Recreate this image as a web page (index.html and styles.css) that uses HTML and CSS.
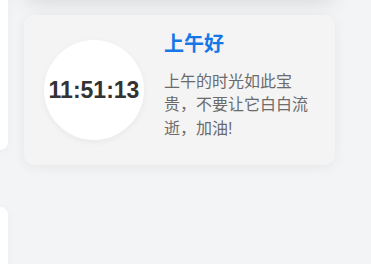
FILE: index.html
```html
<!DOCTYPE html>
<html lang="zh-CN">
<head>
  <meta charset="UTF-8" />
  <meta name="viewport" content="width=device-width, initial-scale=1.0" />
  <title>问候</title>
  <link rel="stylesheet" href="styles.css">
</head>
<body>
  <div class="layout">
    <!-- left column, mostly scrolled off -->
    <div class="side">
      <div class="side-card side-card-top"></div>
      <div class="side-card side-card-bottom"></div>
    </div>

    <div class="main">
      <div class="card card-prev"></div>

      <!-- greeting card -->
      <div class="card greet">
        <div class="clock">11:51:13</div>
        <div class="greet-text">
          <h2 class="greet-title">上午好</h2>
          <p class="greet-desc">上午的时光如此宝贵，不要让它白白流逝，加油!</p>
        </div>
      </div>
    </div>
  </div>
</body>
</html>
```
FILE: styles.css
```css
body {
  margin: 0;
  background: #f3f4f6;
  font-family: "Liberation Sans", Arial, "Noto Sans CJK SC", sans-serif;
  overflow: hidden;
}
.layout {
  display: flex;
  gap: 16px;
  height: 264px;
}
.side {
  width: 8px;
  flex-shrink: 0;
  display: flex;
  flex-direction: column;
  align-items: flex-end;
  gap: 57px;
}
.side-card {
  width: 200px;
  flex-shrink: 0;
  background: #fff;
  border-radius: 8px;
  box-shadow: 0 2px 10px rgba(0,0,0,0.04);
}
.side-card-top {
  height: 250px;
  margin-top: -100px;
}
.side-card-bottom {
  height: 200px;
}
.main {
  width: 311px;
  display: flex;
  flex-direction: column;
  gap: 20px;
}
.card {
  background: #f4f4f5;
  border-radius: 10px;
  box-shadow: 0 2px 12px rgba(0,0,0,0.06);
}
.card-prev {
  height: 100px;
  margin-top: -105px;
  flex-shrink: 0;
  background: #f5f5f6;
  box-shadow: 0 6px 22px rgba(0,0,0,0.13);
}
.greet {
  display: flex;
  gap: 20px;
  padding: 15px 20px;
  height: 150px;
  box-sizing: border-box;
  flex-shrink: 0;
}
.clock {
  width: 100px;
  height: 100px;
  margin-top: 10px;
  flex-shrink: 0;
  border-radius: 50%;
  background: #fff;
  box-shadow: 0 2px 6px rgba(0,0,0,0.05);
  display: flex;
  align-items: center;
  justify-content: center;
  font-size: 23px;
  font-weight: bold;
  color: #333;
}
.greet-text {
  width: 150px;
}
.greet-title {
  margin: 0;
  font-size: 20px;
  line-height: 28px;
  font-weight: bold;
  color: #1677e6;
}
.greet-desc {
  margin: 12px 0 0;
  font-size: 16px;
  line-height: 23.3px;
  color: #6b6b6b;
}
```
